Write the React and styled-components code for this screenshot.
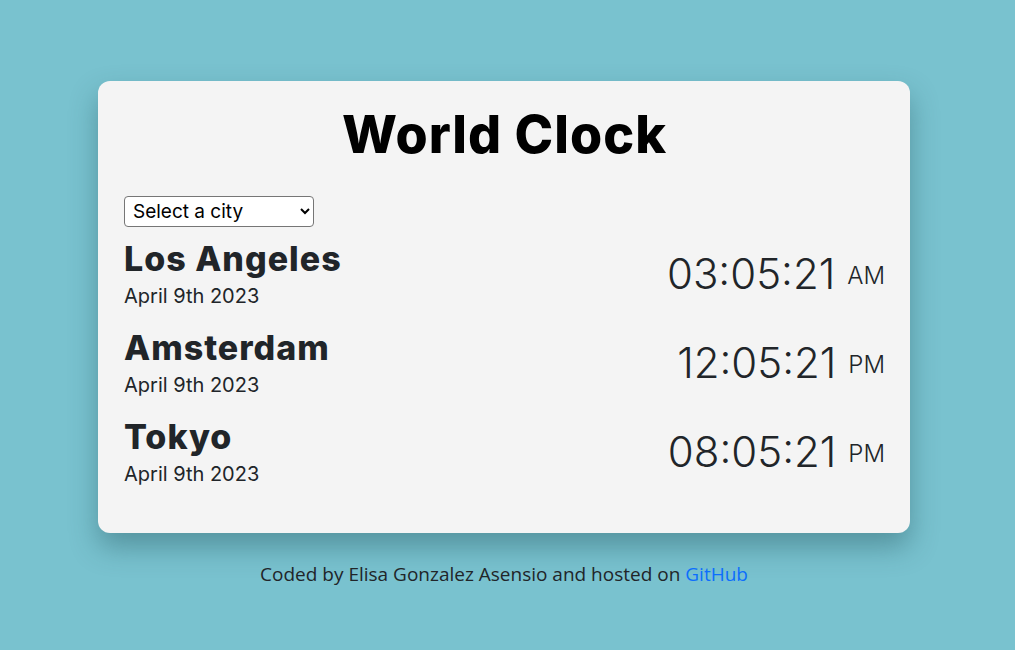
import styled, { createGlobalStyle } from "styled-components";

const GlobalStyle = createGlobalStyle`
  * {
    box-sizing: border-box;
  }

  body {
    margin: 0;
    background-color: #79c2cf;
    font-family: "Inter", "Liberation Sans", sans-serif;
  }
`;

const Page = styled.main`
  min-height: 650px;
  padding: 81px 7px 0 0;
  display: flex;
  flex-direction: column;
  align-items: center;
`;

const Card = styled.section`
  width: 812px;
  padding: 22px 25px 37px 26px;
  background-color: #f4f4f4;
  border-radius: 12px;
  box-shadow: 0 14px 28px rgba(40, 90, 100, 0.45);
`;

const Title = styled.h1`
  margin: 0 0 29px 0;
  text-align: center;
  font-size: 52px;
  font-weight: 800;
  line-height: 64px;
  color: #000;
  letter-spacing: 1px;
`;

const CitySelect = styled.select`
  width: 190px;
  height: 31px;
  padding: 0 4px;
  font-family: "Inter", "Liberation Sans", sans-serif;
  font-size: 19px;
  color: #000;
  background-color: #fff;
  border: 1px solid #767676;
  border-radius: 4px;
`;

const CityList = styled.div`
  display: flex;
  flex-direction: column;
  padding-top: 2px;
`;

const CityRow = styled.div`
  display: flex;
  justify-content: space-between;
  align-items: center;
  height: 89px;
`;

const CityInfo = styled.div`
  display: flex;
  flex-direction: column;
`;

const CityName = styled.h2`
  margin: 0;
  font-size: 34px;
  font-weight: 800;
  line-height: 40px;
  letter-spacing: 1px;
  color: #212529;
`;

const CityDate = styled.div`
  margin-top: 4px;
  font-size: 20px;
  line-height: 26px;
  color: #212529;
`;

const Time = styled.div`
  font-size: 42px;
  font-weight: 300;
  color: #212529;
  white-space: nowrap;
`;

const Meridiem = styled.small`
  margin-left: 12px;
  font-size: 24px;
  vertical-align: 0.2em;
`;

const Footer = styled.footer`
  margin-top: 28px;
  font-family: "Open Sans", "Noto Sans", sans-serif;
  font-size: 19px;
  color: #212529;

  a {
    color: #0d6efd;
    text-decoration: none;
  }
`;

const cities = [
  { name: "Los Angeles", date: "April 9th 2023", time: "03:05:21", ampm: "AM" },
  { name: "Amsterdam", date: "April 9th 2023", time: "12:05:21", ampm: "PM" },
  { name: "Tokyo", date: "April 9th 2023", time: "08:05:21", ampm: "PM" },
];

export default function App() {
  return (
    <>
      <GlobalStyle />
      <Page>
        <Card>
          <Title>World Clock</Title>
          <CitySelect defaultValue="">
            <option value="">Select a city</option>
            <option value="paris">Paris</option>
            <option value="sydney">Sydney</option>
          </CitySelect>
          <CityList>
            {cities.map((city) => (
              <CityRow key={city.name}>
                <CityInfo>
                  <CityName>{city.name}</CityName>
                  <CityDate>{city.date}</CityDate>
                </CityInfo>
                <Time>
                  {city.time}
                  <Meridiem>{city.ampm}</Meridiem>
                </Time>
              </CityRow>
            ))}
          </CityList>
        </Card>
        <Footer>
          Coded by Elisa Gonzalez Asensio and hosted on <a href="#">GitHub</a>
        </Footer>
      </Page>
    </>
  );
}
